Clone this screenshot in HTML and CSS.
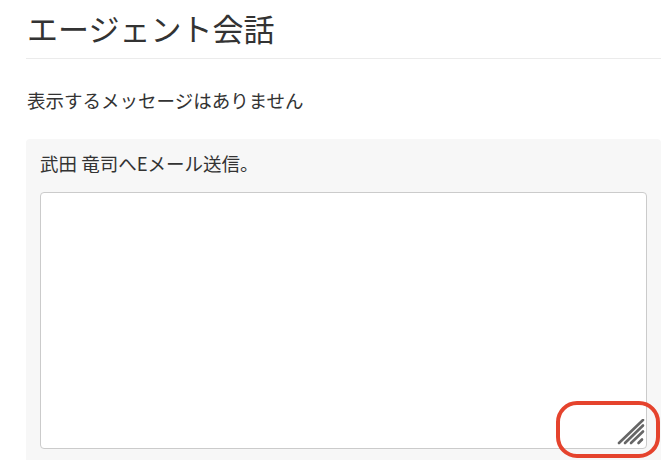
FILE: index.html
```html
<!DOCTYPE html>
<html lang="ja">
<head>
<meta charset="utf-8">
<link rel="stylesheet" href="styles.css">
</head>
<body>
<div class="page">
  <h1 class="title">エージェント会話</h1>
  <hr class="divider">
  <p class="empty">表示するメッセージはありません</p>
  <div class="compose">
    <label class="compose-label" for="msg">武田 竜司へEメール送信。</label>
    <div class="field">
      <textarea id="msg" class="message"></textarea>
      <svg class="grip" width="28" height="26" viewBox="0 0 28 26" aria-hidden="true">
        <g stroke="#666" stroke-width="2.6" stroke-linecap="round">
          <line x1="2" y1="24" x2="26" y2="1"/>
          <line x1="8" y1="24" x2="26" y2="6.5"/>
          <line x1="14" y1="24" x2="26" y2="12.5"/>
          <line x1="21.5" y1="24" x2="25" y2="20.5"/>
        </g>
      </svg>
    </div>
  </div>
  <div class="annotation"></div>
</div>
</body>
</html>
```
FILE: styles.css
```css
html, body {
  margin: 0;
  padding: 0;
  background: #fff;
}
body {
  font-family: "Noto Sans CJK JP", "Noto Sans", sans-serif;
  color: #333;
}
.page {
  position: relative;
  width: 635px;
  margin-left: 26px;
  padding-top: 8px;
  height: 452px;
  overflow: hidden;
}
.title {
  margin: 0 0 0 1px;
  font-size: 31px;
  font-weight: 400;
  line-height: 40px;
  color: #333;
}
.divider {
  margin: 10px 0 0 0;
  border: 0;
  border-top: 1px solid #ebebeb;
  height: 0;
}
.empty {
  margin: 29px 0 0 1px;
  font-size: 18.5px;
  line-height: 24px;
}
.compose {
  margin-top: 27px;
  background: #f7f7f7;
  border-radius: 4px;
  padding: 12px 14px 30px;
}
.compose-label {
  display: block;
  font-size: 18.5px;
  line-height: 24px;
  color: #333;
}
.field {
  position: relative;
  margin-top: 17px;
}
.message {
  display: block;
  box-sizing: border-box;
  width: 100%;
  height: 257px;
  margin: 0;
  border: 1px solid #cbcbcb;
  border-radius: 4px;
  background: #fff;
  resize: none;
  font: inherit;
}
.grip {
  position: absolute;
  right: 2px;
  bottom: 4px;
}
.annotation {
  position: absolute;
  left: 530px;
  top: 401px;
  width: 96px;
  height: 49px;
  border: 4px solid #e5432d;
  border-radius: 21px;
}
```
